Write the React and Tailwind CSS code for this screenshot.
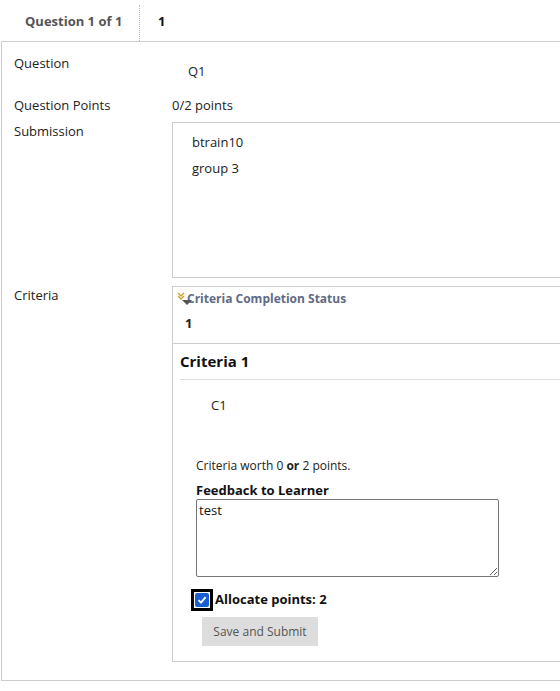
const Label = ({ children, className = "" }) => (
  <div className={`w-[158px] shrink-0 text-[13px] leading-[18px] text-[#222] ${className}`}>
    {children}
  </div>
);

const StatusIcon = () => (
  <svg width="16" height="14" viewBox="0 0 16 14" className="absolute left-[4px] top-[5px]">
    <path d="M1 1 L4 4 L7 1 M1 4 L4 7 L7 4" fill="none" stroke="#c9a227" strokeWidth="1.3" />
    <path d="M5 8 L15 8 L10 13 Z" fill="#555" />
  </svg>
);

export default function App() {
  return (
    <div className="w-[560px] h-[691px] overflow-hidden bg-white font-['Open_Sans',sans-serif] text-[#222]">
      {/* tab row */}
      <div className="flex h-[41px] items-center">
        <div className="w-[139px] pl-[25px] pt-[2px] text-[13px] font-bold text-[#555]">Question 1 of 1</div>
        <div className="h-[36px] border-l border-dotted border-[#bbb] self-end"></div>
        <div className="pl-[18px] pt-[2px] text-[13px] font-bold text-[#111]">1</div>
      </div>

      {/* main box */}
      <div className="ml-[1px] w-[620px] border border-[#ccc] pl-[12px] pt-[12px] pb-[18px]">
        <div className="flex">
          <Label>Question</Label>
          <div className="pl-[16px] pt-[8px] text-[13px] leading-[18px]">Q1</div>
        </div>

        <div className="mt-[16px] flex">
          <Label>Question Points</Label>
          <div className="text-[13px] leading-[18px]">0/2 points</div>
        </div>

        <div className="mt-[8px] flex">
          <Label>Submission</Label>
          <div className="h-[156px] flex-1 border border-[#ccc] pl-[19px] pt-[10px] text-[13px] leading-[18px]">
            <p className="mb-[8px]">btrain10</p>
            <p>group 3</p>
          </div>
        </div>

        <div className="mt-[8px] flex">
          <Label>Criteria</Label>
          <div className="h-[376px] flex-1 border border-[#ccc]">
            <div className="relative h-[57px] border-b border-[#ccc]">
              <StatusIcon />
              <div className="pl-[14px] pt-[4px] text-[12px] leading-[16px] font-bold text-[#5f6b86]">
                Criteria Completion Status
              </div>
              <div className="pl-[12px] pt-[7px] text-[13px] leading-[18px] font-bold text-[#222]">1</div>
            </div>
            <div className="pl-[7px]">
              <div className="border-b border-[#ddd] pt-[7px] pb-[7px] text-[15px] leading-[21px] font-bold text-[#111]">
                Criteria 1
              </div>
              <div className="pl-[31px] pt-[16px] text-[13px] leading-[18px]">C1</div>
              <div className="pl-[16px] pt-[44px] text-[12px] leading-[16px]">
                Criteria worth 0 <b>or</b> 2 points.
              </div>
              <div className="pl-[16px] pt-[8px] text-[13px] leading-[17px] font-bold text-[#111]">
                Feedback to Learner
              </div>
              <div className="pl-[16px]">
                <textarea
                  defaultValue="test"
                  className="block h-[78px] w-[303px] border border-[#767676] rounded-[2px] px-[2px] py-[1px] text-[13px] leading-[18px] text-[#111] font-['Open_Sans',sans-serif]"
                />
              </div>
              <div className="mt-[12px] flex items-center pl-[11px]">
                <div className="flex h-[22px] w-[22px] items-center justify-center border-[3px] border-black bg-white">
                  <div className="flex h-[14px] w-[14px] items-center justify-center rounded-[2px] bg-[#1a5fd0]">
                    <svg width="10" height="10" viewBox="0 0 10 10">
                      <path d="M1.5 5.2 L4 7.6 L8.6 2.2" fill="none" stroke="white" strokeWidth="1.8" />
                    </svg>
                  </div>
                </div>
                <span className="pl-[2px] text-[13px] font-bold text-[#111]">Allocate points: 2</span>
              </div>
              <div className="mt-[6px] pl-[22px]">
                <button className="h-[29px] w-[116px] bg-[#ddd] text-[12px] text-[#555]">Save and Submit</button>
              </div>
            </div>
          </div>
        </div>
      </div>
    </div>
  );
}
